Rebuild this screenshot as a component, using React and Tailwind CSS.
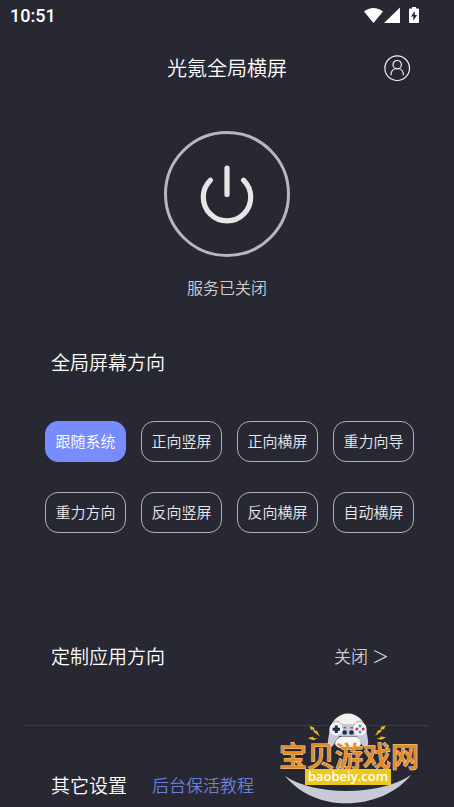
import React, { useState } from 'react';

const modes = [
    '跟随系统', '正向竖屏', '正向横屏', '重力向导',
    '重力方向', '反向竖屏', '反向横屏', '自动横屏',
];

const StatusBar = () => (
    <div className="flex h-8 items-center justify-between pl-[10px] pr-[34px]">
        <span className="font-['Roboto','sans-serif'] text-[18px] font-medium leading-6 text-white">10:51</span>
        <svg width="56" height="18" viewBox="0 0 56 18" fill="#fff" aria-hidden="true">
            <path d="M0 4.600C5.600-.2 13.400-.2 19 4.600L9.500 16z" />
            <path d="M36 .5V16H20z" />
            <path fillRule="evenodd" d="M48 0h4v1.500h2a1 1 0 0 1 1 1V15a1 1 0 0 1-1 1h-8a1 1 0 0 1-1-1V2.500a1 1 0 0 1 1-1h2zM50.800 4l-3.800 5.500h2.300v4.200l3.800-5.600h-2.300z" />
        </svg>
    </div>
);

const Watermark = () => (
    <svg
        width="144"
        height="92"
        viewBox="0 0 144 92"
        className="pointer-events-none absolute -top-[14px] right-[7px]"
    >
        {/* Smile */}
        <path d="M7 64C36 84 102 84 133 63C106 97 40 104 7 64z" fill="#c9cad8" />

        {/* Controller */}
        <path d="M52 20a18 18.500 0 0 1 36 0z" fill="#f1f1f2" />
        <path d="M55 11q3-2.500 7-1M78 10q4-1.500 7 1" stroke="#dbb64e" strokeWidth="1.300" fill="none" />
        <path d="M57 11c5-1 7 1 9 1h8c2 0 4-2 9-1c4 1 5 4 5.500 8l1.500 9c.5 4 0 7-3 7c-4 0-5-9-9-11H62c-4 2-6 11-9 11c-3 0-3.500-3-3-7l1.500-9c.5-4 1.500-7 5.500-8z" fill="#c8c9d8" />
        <circle cx="58" cy="17" r="6.600" fill="#f4f4f7" />
        <circle cx="82" cy="17" r="6.600" fill="#f4f4f7" />
        <path d="M56.800 13.500h3v2.200h2.200v3h-2.200v2.200h-3v-2.200h-2.200v-3h2.200z" fill="#17324a" />
        <circle cx="82" cy="13.900" r="1.500" fill="#2ba7c9" />
        <circle cx="82" cy="20.100" r="1.500" fill="#2ba7c9" />
        <circle cx="78.900" cy="17" r="1.500" fill="#d63544" />
        <circle cx="85.100" cy="17" r="1.500" fill="#d63544" />
        <path d="M65.500 15h2.500v1.500h-2.500zM72.500 15h2.500v1.500h-2.500z" fill="#d63544" />
        <circle cx="66.700" cy="20.500" r="2.300" fill="#17324a" />
        <circle cx="73.500" cy="20.500" r="2.300" fill="#17324a" />
        <path d="M57 32c1-5 4-7.500 8-7.500h11c4 0 6 2.500 7 7.500c-2 7-24 7-26 0z" fill="#f7f7f7" />

        {/* Lightning */}
        <g fill="#f0b51f">
            <path d="M31.500 14l4.500 1.500.8 3.500 2-.5 3 6-6-4.500-.8-2.500-2 .5z" />
            <path d="M30 26l5-1.200 1 1.500 4 .2-3 1-1 .8-3-.8z" />
            <path d="M107.500 13.500l-4.500 1.500-.8 3.500-2-.5-3 6 6-4.500.8-2.500 2 .5z" />
            <path d="M108 25.500l-5-1.200-1 1.500-4 .7 3 .5 1 .8 3-.8z" />
        </g>

        <text
            x="71"
            y="55"
            textAnchor="middle"
            stroke="#f8dcb4"
            strokeWidth="1"
            paintOrder="stroke"
            fill="#e48c24"
            className="font-['Noto_Sans_CJK_SC','sans-serif'] text-[28px] font-medium"
        >
            宝贝游戏网
        </text>
        <path d="M27 57h86v16H27z" fill="#edc91f" />
        <text
            x="70"
            y="69"
            textAnchor="middle"
            fill="#fff"
            className="font-['Open_Sans','sans-serif'] text-[13px] font-semibold"
        >
            baobeiy.com
        </text>
    </svg>
);

const App = () => {
    const [mode, setMode] = useState('跟随系统');
    const [running, setRunning] = useState(false);

    return (
        <div className="min-h-screen overflow-hidden bg-[#282832] font-['Noto_Sans_CJK_SC','sans-serif'] font-[350] text-white">
            <StatusBar />

            {/* Header */}
            <header className="grid h-[72px] grid-cols-[1fr_auto_1fr] items-center px-[43px]">
                <h1 className="col-start-2 text-[20px] font-[350] leading-7">光氪全局横屏</h1>
                <button aria-label="我的" className="justify-self-end">
                    <svg width="28" height="28" viewBox="0 0 28 28" fill="none" stroke="#f4f4f4" strokeWidth="1.200" strokeLinecap="round">
                        <circle cx="14.200" cy="14.200" r="12.300" />
                        <circle cx="14.200" cy="10.700" r="4.200" />
                        <path d="M8 20.700c0-3.800 2.600-6.200 6.200-6.200s6.200 2.400 6.200 6.200" />
                    </svg>
                </button>
            </header>

            {/* Power switch */}
            <section className="mt-[27px] flex flex-col items-center">
                <button
                    aria-label="服务开关"
                    aria-pressed={running}
                    onClick={() => setRunning(!running)}
                    className="flex size-[126px] items-center justify-center rounded-full border-3 border-[#b8b8b8]"
                >
                    <svg width="60" height="60" viewBox="0 0 60 60" fill="none" stroke="#e6e6e6" strokeWidth="5.200" strokeLinecap="round">
                        <path d="M30 4v26.500" />
                        <path d="M13.500 16.200a23.700 23.700 0 1 0 33 0" />
                    </svg>
                </button>
                <p className="mt-[18px] text-[16px] leading-6 text-[#d0d0d4]">{running ? '服务已开启' : '服务已关闭'}</p>
            </section>

            <main className="mx-[25px]">
                {/* Global orientation */}
                <section className="mt-[49px] border-b border-[#2c2c36] pb-[53px]">
                    <h2 className="px-[26px] text-[19px] font-[350] leading-7">全局屏幕方向</h2>
                    <div className="mt-[45px] ml-5 mr-[15px] grid grid-cols-4 gap-x-[15px] gap-y-[30px]">
                        {modes.map((m) => (
                            <button
                                key={m}
                                onClick={() => setMode(m)}
                                className={`h-[41px] rounded-[13px] border text-[15px] whitespace-nowrap ${mode === m
                                    ? 'border-[#768cff] bg-[#768cff] text-white'
                                    : 'border-[#b0b0b4] text-[#eaeaec]'}`}
                            >
                                {m}
                            </button>
                        ))}
                    </div>
                </section>

                {/* Per-app orientation */}
                <section className="flex h-[139px] items-center justify-between border-b border-[#3c3c48] pl-[26px] pr-10">
                    <h2 className="text-[19px] font-[350] leading-7">定制应用方向</h2>
                    <button className="flex items-center gap-1 text-[17px] leading-7 text-[#cfcfd3]">
                        关闭<span>＞</span>
                    </button>
                </section>

                {/* Other settings */}
                <section className="relative flex items-center gap-[25px] pl-[26px] pt-[45px] pb-1">
                    <h2 className="text-[19px] font-[350] leading-7">其它设置</h2>
                    <a href="#guide" className="text-[17px] leading-7 text-[#6c7fdc]">后台保活教程</a>
                    <Watermark />
                </section>
            </main>
        </div>
    );
};

export default App;
